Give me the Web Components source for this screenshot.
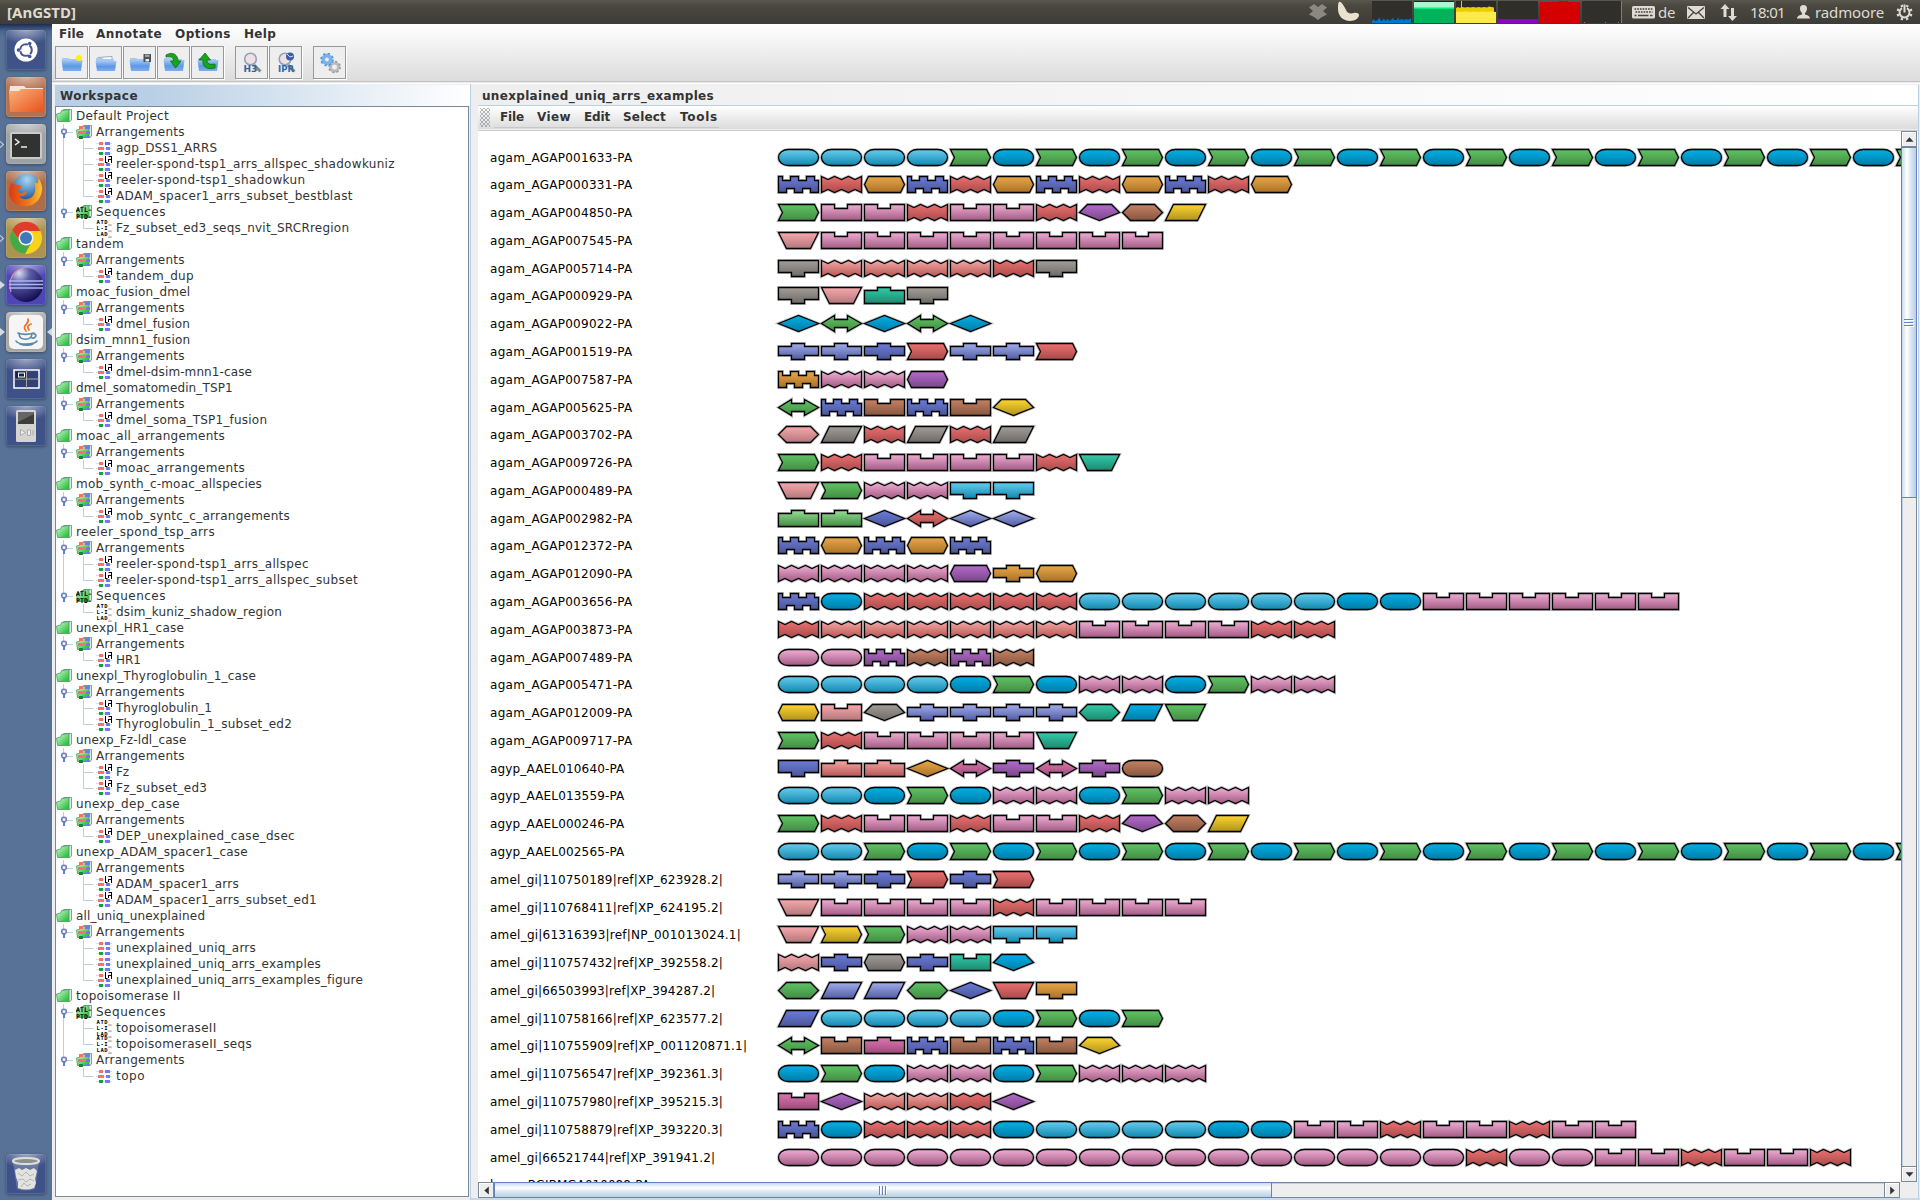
<!DOCTYPE html>
<html lang="en">
<head>
<meta charset="utf-8">
<title>AnGSTD</title>
<style>
html,body{margin:0;height:100%;overflow:hidden;background:#eee}
body{font-family:"DejaVu Sans",sans-serif;font-size:12px;color:#333}
</style>
</head>
<body>
<angstd-desktop></angstd-desktop>
<script>
function define(name, markup, init) {
  const t = document.createElement('template');
  t.innerHTML = markup;
  customElements.define(name, class extends HTMLElement {
    connectedCallback() {
      if (this.shadowRoot) return;
      this.attachShadow({ mode: 'open' }).append(t.content.cloneNode(true));
      if (init) init.call(this, this.shadowRoot);
    }
  });
}

/* A run of text that is tracked out to an exact advance width. */
define('fit-text', `<style>:host{display:inline-block;white-space:pre;flex:none}span{display:inline-block}</style><span><slot></slot></span>`, function (r) {
  const s = r.querySelector('span'), w = +this.getAttribute('w');
  if (!w) return;
  const n = this.textContent.length;
  s.style.letterSpacing = ((w - s.getBoundingClientRect().width) / n).toFixed(3) + 'px';
});

/* ---------- top panel ---------- */
define('top-panel', `<style>
:host{display:flex;height:24px;align-items:center;background:linear-gradient(#5a574d,#4a483f 25%,#3d3c37);color:#dfdbd2;font:15px/24px "Noto Sans","Open Sans",sans-serif;padding-left:7px;box-sizing:border-box}
b{font-size:15px;font-weight:700}
svg{display:block;flex:none}
.sp{flex:1}
.g{display:flex;gap:2px;margin:0 10px 0 13px}
</style>
<b><fit-text w="69">[AnGSTD]</fit-text></b><div class="sp"></div>
<svg width="18" height="18" viewBox="0 0 18 18" fill="#8b8881"><path d="M0 4.500 5 1 9 4 13 1 18 4.500 14 8 18 11.500 13 14 9 17 5 14 0 11.500 4 8Z"/></svg>
<svg width="22" height="22" viewBox="0 0 22 22" style="margin-left:10px" fill="#e9e2cf"><path d="M2 1C4 0 7 5 9 9c1 3 4 4 8 3 2-.5 5 0 5 2 0 3-4 6-9 6C6 20 1 15 1 8 1 5 1 2 2 1Z"/></svg>
<div class="g">
<svg width="40" height="24"><path fill="#302f2b" d="M0 1H40V23H0Z"/><path fill="#0077c8" d="M0 23V21l2-2 1 2 3-1 1-3 2 4 2-1 1-2 1 3 3-2 1 2 2-1 2-2 1 2 3 0 1-3 1 3 3-1 2 1 3-1 1 1 3-2V23Z"/></svg>
<svg width="40" height="24"><path fill="#22211f" d="M0 1H40V23H0Z"/><path fill="#a8f7d0" d="M0 2H40V8H0Z"/><path fill="#00f07e" d="M0 7.500H40V9H0Z"/><path fill="#00b35b" d="M0 9H40V23H0Z"/></svg>
<svg width="40" height="24"><path fill="#2b2a27" d="M0 1H40V23H0Z"/><path fill="#e8d000" d="M0 8l2-1 2 1 1-1V1h1v6l3 .5 3-.5 2 .5 3-.5 3 .5 3-.5 2 .5 3-.5 3 .5 2-1 5 1V12H0Z"/><path fill="#ffe94d" d="M0 12l3-.5 3 .5 4-.7 4 .7 4-.5 4 .5 5-.5 4 .5 4-.5 5 .5V23H0Z"/></svg>
<svg width="40" height="24"><path fill="#2f2e2a" d="M0 1H40V19H0Z"/><path fill="#8f00c4" d="M0 19H40V23H0Z"/></svg>
<svg width="40" height="24"><path fill="#d40000" d="M0 2H19V1H28V2H40V23H0Z"/></svg>
<svg width="40" height="24"><path fill="#302f2b" d="M0 1H40V23H0Z"/><path stroke="#e8600a" d="M39.500 1V23M2.500 22v1M23.500 22v1M36.500 22v1"/></svg>
</div>
<svg width="23" height="13" viewBox="0 0 23 13"><rect width="23" height="12.500" rx="1.500" fill="#dfdbd2"/><path stroke="#45433c" stroke-width="1.600" stroke-dasharray="1.700 1" d="M2.500 3H21M3.500 6H20.500"/><path stroke="#45433c" stroke-width="1.600" d="M2.500 9.500H4.500M6 9.500H16.500M18 9.500H20.500"/></svg>
<fit-text w="17" style="margin-left:3px">de</fit-text>
<svg width="18" height="13" viewBox="0 0 18 13" style="margin-left:12px"><rect width="18" height="13" rx="1" fill="#dfdbd2"/><path d="M1 1.500 9 8 17 1.500M1 12 6.500 6.500M17 12 11.500 6.500" fill="none" stroke="#45433c" stroke-width="1.300"/></svg>
<svg width="17" height="17" viewBox="0 0 17 17" style="margin-left:15px" fill="#dfdbd2"><path d="M5 0 9.500 5H6.500V13H3.500V5H.500ZM12.500 17 8 12H11V4H14V12H17Z"/></svg>
<fit-text w="35" style="margin-left:13px">18:01</fit-text>
<svg width="13" height="14" viewBox="0 0 13 14" style="margin-left:12px" fill="#dfdbd2"><path d="M6.500 0C9 0 10 1.500 10 3.500 10 5.500 9 7 8 8V9.500C10 10 13 11 13 13.500H0C0 11 3 10 5 9.500V8C4 7 3 5.500 3 3.500 3 1.500 4 0 6.500 0Z"/></svg>
<fit-text w="69" style="margin-left:5px">radmoore</fit-text>
<svg width="17" height="17" viewBox="-8.500 -8.500 17 17" style="margin:0 7px 0 12px" fill="none" stroke="#dfdbd2"><path d="M-2.500-4.300A5 5 0 1 0 2.500-4.300" stroke-width="2"/><circle r="7" stroke-width="2.200" stroke-dasharray="2.300 3.198" stroke-dashoffset="-1.500"/><path d="M0-8V0" stroke-width="2"/></svg>`);

/* ---------- launcher ---------- */
define('launcher-tile', `<style>
:host{display:block;width:40px;height:40px;border-radius:4px;box-sizing:border-box;background:radial-gradient(ellipse 70% 35% at 50% 0,rgba(255,255,255,.5),transparent),var(--c,#3d4f86);box-shadow:0 0 0 1px rgba(255,255,255,.12) inset,0 1px 3px rgba(0,0,0,.35)}
::slotted(svg){display:block}
</style><slot></slot>`);
define('app-launcher', `<style>
:host{display:flex;flex-direction:column;gap:7px;width:52px;padding:6px 0 6px 6px;box-sizing:border-box;background:linear-gradient(#1d2b4f,#4c668f 7px,#577296 14px,#577296);border-right:0;flex:none}
.r{display:flex;width:46px;height:40px;align-items:center}
.r.m::before{content:"";width:5px;height:8px;margin-left:-6px;margin-right:1px;background:#d5dbe4;clip-path:polygon(0 0,100% 50%,0 100%)}
.r.o::before{background:none;border:0;clip-path:none;width:4px;height:4px;margin-left:-8px;margin-right:3px;border:solid #c9d2de;border-width:1px 1px 0 0;transform:rotate(45deg);box-sizing:content-box}
.r.f::after{content:"";width:5px;height:8px;margin-left:1px;background:#d5dbe4;clip-path:polygon(100% 0,0 50%,100% 100%)}
.sp{flex:1}
</style>
<div class="r"><launcher-tile style="--c:#3f5388"><svg width="40" height="40" viewBox="0 0 40 40"><circle cx="20" cy="20" r="11.500" fill="#fff"/><g fill="none" stroke="#42578c" stroke-width="2"><circle cx="20" cy="20" r="5.800" stroke-dasharray="10.600 1.550" stroke-dashoffset="-6"/></g><g fill="#42578c"><circle cx="12.500" cy="20" r="1.800"/><circle cx="23.700" cy="13.500" r="1.800"/><circle cx="23.700" cy="26.500" r="1.800"/></g></svg></launcher-tile></div>
<div class="r"><launcher-tile style="--c:#b5704f"><svg width="40" height="40" viewBox="0 0 40 40"><defs><linearGradient id="fo" x2="1" y2="1"><stop stop-color="#f9b27a"/><stop offset="1" stop-color="#e9531d"/></linearGradient></defs><path fill="#f1e6de" d="M4 9h14l2 2h17v6H3Z"/><path fill="url(#fo)" d="M3 14h10l2-2h22v23H4Z"/></svg></launcher-tile></div>
<div class="r m o"><launcher-tile style="--c:#9fa2a4"><svg width="40" height="40" viewBox="0 0 40 40"><rect x="4" y="8" width="32" height="27" rx="2" fill="#c9cbc9"/><rect x="6" y="10" width="28" height="23" fill="#30332f"/><path d="M9 15l4 3-4 3M15 23h6" stroke="#eee" stroke-width="1.500" fill="none"/></svg></launcher-tile></div>
<div class="r"><launcher-tile style="--c:#ad6d4a"><svg width="40" height="40" viewBox="0 0 40 40"><defs><radialGradient id="ffb" cx=".5" cy=".2" r=".8"><stop stop-color="#a9d8f4"/><stop offset="1" stop-color="#0f4b91"/></radialGradient><linearGradient id="ffo" x2="1"><stop stop-color="#d93a14"/><stop offset=".6" stop-color="#ef7a1c"/><stop offset="1" stop-color="#fcc62e"/></linearGradient></defs><circle cx="21" cy="17" r="14" fill="url(#ffb)"/><path fill="url(#ffo)" d="M5 12c1 0 3 2 7 2 3 0 4 1 3 3-1 1-3 1-3 3 1 3 5 2 7 1 2 0 2 1 1 2-2 2-5 3-7 2 3 4 9 4 13 1 4-4 4-10 2-15 6 4 4-2 4-4 5 5 5 14 2 19-3 6-9 10-16 9C9 35 3 29 3 21c0-3 1-6 2-9Z"/></svg></launcher-tile></div>
<div class="r m o"><launcher-tile style="--c:#ad9350"><svg width="40" height="40" viewBox="-20 -20 40 40"><circle r="16" fill="#fbd21a"/><path fill="#e03c2b" d="M-14-8A16 16 0 0 1 14.500-7H0A7 7 0 0 0-6 3.500Z"/><path fill="#46a847" d="M-14-8A16 16 0 0 0-1 16L6 3.500A7 7 0 0 1-6 3.500Z"/><circle r="7.500" fill="#f4f4f4"/><circle r="6" fill="#3c79bd"/></svg></launcher-tile></div>
<div class="r m"><launcher-tile style="--c:#4d46b4"><svg width="40" height="40" viewBox="0 0 40 40"><defs><radialGradient id="ec" cx=".3" cy=".15" r=".9"><stop stop-color="#d9dcf0"/><stop offset=".35" stop-color="#5b5ba8"/><stop offset="1" stop-color="#100c4e"/></radialGradient></defs><circle cx="20" cy="20" r="17" fill="url(#ec)"/><path d="M5 27C1 12 10 4 18 3" stroke="#d68bb4" stroke-width="1.200" fill="none"/><path d="M3 16h34M3 19.500h34M3 23h34" stroke="#a9b6ef" stroke-width="1.300"/></svg></launcher-tile></div>
<div class="r m f"><launcher-tile style="--c:#a9a6a4"><svg width="40" height="40" viewBox="0 0 40 40"><rect x="3" y="3" width="34" height="34" rx="5" fill="#f5f5f5"/><g fill="none" stroke-linecap="round"><path d="M22 7c2 5-7 6-2 12M25 12c-5 2-3 4-2 6" stroke="#e8772e" stroke-width="1.800"/><path d="M12 21c4 1.500 11 1.500 16 0M13 22c1 7 12 7 13 0M28 22c4 0 1 5-2 4M10 29c2 4 18 4 21 0M14 32c5 2 12 1 13 0" stroke="#5a87a8" stroke-width="1.600"/></g></svg></launcher-tile></div>
<div class="r"><launcher-tile style="--c:#3f5189"><svg width="40" height="40" viewBox="0 0 40 40"><rect x="8" y="11" width="25" height="18" fill="#24345c" fill-opacity=".5" stroke="#fff" stroke-width="1.500"/><path d="M20.500 11V29M8 20H33" stroke="#a9a79b"/><rect x="9.500" y="12.500" width="10" height="7" fill="#17244a"/><rect x="12.500" y="14" width="6" height="4" fill="none" stroke="#fff"/></svg></launcher-tile></div>
<div class="r"><launcher-tile style="--c:#3f5189"><svg width="40" height="40" viewBox="0 0 40 40"><rect x="10" y="4" width="20" height="32" rx="1.500" fill="#d5d4d1"/><rect x="12" y="6" width="16" height="12" fill="#3c3e3c"/><path d="M12 16 28 8V6H12Z" fill="#666"/><path d="M14.500 23.500l5 3-5 3ZM21.500 24v5.500h3V24ZM27 24v5.500" fill="#eee" stroke="#aaa"/></svg></launcher-tile></div>
<div class="sp"></div>
<div class="r"><launcher-tile style="--c:#3f5189"><svg width="40" height="40" viewBox="0 0 40 40"><path d="M7 8 11 35q9 3 18 0L33 8Z" fill="#8e9bb6" opacity=".5"/><path d="M9 16l4-2 3 2 4-2 4 2 4-2 3 3-2 8 1 4-2 5q-8 3-16 0l0-6-2-5Z" fill="#e2e2df"/><path d="M12 19l4 3 4-4 4 4 4-2M12 26l5-1 3 3 4-3 4 2M15 33l3-4 3 3 4-2" stroke="#b4b5b3" fill="none"/><ellipse cx="20" cy="7" rx="13" ry="3" fill="#8b9190" stroke="#dedfd9" stroke-width="2"/></svg></launcher-tile></div>`);

/* ---------- main menu and toolbar ---------- */
const folder = (y = 0) => `<path d="M6 11h6l2 1h10v4H6Z" fill="#a9c8ee"/><path d="M5.500 ${13 + y}h21l-1.500 ${11 - y}h-18Z" fill="url(#f)"/>`;
const icons = {
  fresh: folder() + '<circle cx="23" cy="11" r="3" fill="#fff200"/>',
  open: '<path d="M8 10.500l14-1v4H8Z" fill="#fff" stroke="#9ab"/>' + folder(1),
  save: folder() + '<path d="M19.500 7h7.500v8h-7.500Z" fill="#4b5158"/><path d="M21 7.500h4.500v2.500h-4.500Z" fill="#9aa2a8"/><path d="M21.500 12h3.500v2.500h-3.500Z" fill="#e8ecee"/>',
  imp: folder() + '<path d="M8 8c7-4 12 0 12 6h3l-5.500 7-5-7h3c0-4-3-4.500-7.500-4Z" fill="#17a51c" stroke="#0a6f10" stroke-width=".8"/>',
  exp: folder() + '<path d="M23 21c-8 2-13-1-12-8H7l6-7 5.500 7H15c0 4 3 5 8 4Z" fill="#17a51c" stroke="#0a6f10" stroke-width=".8"/>',
  h3: '<path d="M18 18l6.500 6.500" stroke="#888" stroke-width="3"/><circle cx="14.500" cy="12" r="5.800" fill="#f1dfe2" stroke="#8ea2bb" stroke-width="1.600"/><text x="7.500" y="24.500" font-size="9" font-weight="700" fill="#2c68a8" font-family="DejaVu Sans">H3</text>',
  ipr: '<path d="M18 18l6.500 6.500" stroke="#888" stroke-width="3"/><circle cx="15" cy="12" r="5.800" fill="#f1dfe2" stroke="#8ea2bb" stroke-width="1.600"/><circle cx="20" cy="9.500" r="4" fill="#385fa6"/><path d="M17 7l3 3 3-1" stroke="#cfe0f5" fill="none"/><text x="8" y="24.500" font-size="8.500" font-weight="700" fill="#2c68a8" font-family="DejaVu Sans" textLength="16" lengthAdjust="spacingAndGlyphs">IPR</text>',
  gears: '<circle cx="20.500" cy="20" r="4" fill="none" stroke="#bbb" stroke-width="3"/><circle cx="20.500" cy="20" r="5.600" fill="none" stroke="#999" stroke-width="1.600" stroke-dasharray="2.100 2.298"/><circle cx="13" cy="12.500" r="3.800" fill="none" stroke="#7ab2ee" stroke-width="3.800"/><circle cx="13" cy="12.500" r="6" fill="none" stroke="#5594dd" stroke-width="1.600" stroke-dasharray="2.300 2.412"/>'
};
define('tool-button', `<style>:host{display:block;width:33px;height:33px;box-sizing:border-box;border:1px solid #999;background:#eee;box-shadow:1px 1px 0 #fff}svg{display:block;margin:-.5px}</style><svg width="32" height="32" viewBox="0 0 32 32"></svg>`, function (r) {
  r.querySelector('svg').innerHTML = '<defs><linearGradient id="f" x2="0" y2="1"><stop stop-color="#a4c8f5"/><stop offset=".55" stop-color="#5c98e6"/><stop offset="1" stop-color="#7db0ee"/></linearGradient></defs>' + icons[this.getAttribute('icon')];
});
define('main-bar', `<style>
:host{display:block;height:60px;background:linear-gradient(#fff,#dcdcdc 57px,#dcdcdc);border-bottom:1px solid #fff;box-sizing:border-box;box-shadow:inset 0 -1px #e8e8e8,inset 0 -2px #c4c4c4}
nav{display:flex;height:22px;padding:0 0 0 7px;font-weight:700;line-height:21px;gap:14px}
div{display:flex;gap:1px;padding-left:3px}
.g{margin-left:10px}
</style>
<nav><fit-text w="25">File</fit-text><fit-text w="66" style="margin-left:-2px">Annotate</fit-text><fit-text w="56" style="margin-left:-1px">Options</fit-text><fit-text w="32" style="margin-left:-1px">Help</fit-text></nav>
<div><tool-button icon="fresh"></tool-button><tool-button icon="open"></tool-button><tool-button icon="save"></tool-button><tool-button icon="imp"></tool-button><tool-button icon="exp"></tool-button><tool-button class="g" icon="h3"></tool-button><tool-button icon="ipr"></tool-button><tool-button class="g" icon="gears"></tool-button></div>`);

/* ---------- workspace tree: [project, end of label, [group, [kind, leaf, end], ...], ...] ---------- */
const tree = [
 ['Default Project',168.500,['A',['a','agp_DSS1_ARRS',216.700],['s','reeler-spond-tsp1_arrs_allspec_shadowkuniz',394.300],['s','reeler-spond-tsp1_shadowkun',305],['s','ADAM_spacer1_arrs_subset_bestblast',352.300]],['S',['q','Fz_subset_ed3_seqs_nvit_SRCRregion',348.700]]],
 ['tandem',123.500,['A',['s','tandem_dup',193.300]]],
 ['moac_fusion_dmel',189.700,['A',['s','dmel_fusion',189.500]]],
 ['dsim_mnn1_fusion',189.700,['A',['s','dmel-dsim-mnn1-case',251.500]]],
 ['dmel_somatomedin_TSP1',232.300,['A',['s','dmel_soma_TSP1_fusion',266.700]]],
 ['moac_all_arrangements',224.500,['A',['s','moac_arrangements',244.500]]],
 ['mob_synth_c-moac_allspecies',261.500,['A',['s','mob_syntc_c_arrangements',289.500]]],
 ['reeler_spond_tsp_arrs',214.500,['A',['s','reeler-spond-tsp1_arrs_allspec',308.500],['s','reeler-spond-tsp1_arrs_allspec_subset',357.500]],['S',['q','dsim_kuniz_shadow_region',281.500]]],
 ['unexpl_HR1_case',183.500,['A',['s','HR1',140.500]]],
 ['unexpl_Thyroglobulin_1_case',255.500,['A',['s','Thyroglobulin_1',211.500],['s','Thyroglobulin_1_subset_ed2',291.500]]],
 ['unexp_Fz-ldl_case',186,['A',['s','Fz',128.500],['s','Fz_subset_ed3',206.700]]],
 ['unexp_dep_case',179.500,['A',['s','DEP_unexplained_case_dsec',294.500]]],
 ['unexp_ADAM_spacer1_case',247.500,['A',['s','ADAM_spacer1_arrs',238.500],['s','ADAM_spacer1_arrs_subset_ed1',316.500]]],
 ['all_uniq_unexplained',204.700,['A',['a','unexplained_uniq_arrs',255.500],['a','unexplained_uniq_arrs_examples',320.500],['s','unexplained_uniq_arrs_examples_figure',362.500]]],
 ['topoisomerase II',180,['S',['q','topoisomeraseII',216],['q','topoisomeraseII_seqs',251.500]],['A',['a','topo',144.500]]]
];
const fold = '<defs><linearGradient id="g" x2="1" y2="1"><stop stop-color="#e4fbe6"/><stop offset=".45" stop-color="#7fdc8a"/><stop offset="1" stop-color="#17b52c"/></linearGradient></defs><path d="M5 3.500 8 1.500H15.500V12L13.500 14Z" fill="#dfe6e0" stroke="#7d9484" stroke-width=".9"/><path d="M.500 6 4.500 5 6 2.500 13 1.500V13.500H1.500Z" fill="url(#g)" stroke="#3f9f5c" stroke-width=".8"/>';
const bars = '<path d="M0 3.500H16M0 8.500H16M0 13.500H16" stroke="#ddd"/><path fill="#ff6e6e" d="M3 2h4v3H3ZM2 7h6v3H2Z"/><path fill="#7078ff" d="M9 2h5v3H9ZM10 7h4v3h-4ZM9 12h5v3H9Z"/><path fill="#16a040" d="M3 12h4v3H3Z"/>';
const nodeIcon = {
  p: fold,
  A: fold + '<path fill="#ff6e6e" d="M3 2h4v3H3ZM2 7h7v3H2Z"/><path fill="#7078ff" d="M9 2h5v3H9ZM10 7h4v3h-4ZM9 12h5v2H9Z"/><path fill="#0d8a34" d="M3 12h4v3H3Z"/>',
  S: fold + '<g font-family="DejaVu Sans Mono" font-weight="700" font-size="6.500" fill="#000"><text x="0" y="7.500" textLength="16">ATL-</text><text x="0" y="14.500" textLength="16">PTD-</text></g>',
  a: bars,
  s: bars + '<path fill="#fff" d="M8.500-1h7.500v8H8.500Z"/><path d="M9.500 0V7M9.500 6.500H11.500M12 3.500H15M12.500 .500H15.500M15.500 0V7M12.500 3.500V6" stroke="#000" fill="none"/>',
  q: '<g font-family="DejaVu Sans Mono" font-weight="700" font-size="5.500" fill="#000"><text x=".5" y="4" textLength="15">ATD_</text><text x=".5" y="10" textLength="15">L-I_</text><text x=".5" y="16" textLength="15">LAD_</text></g>'
};
define('tree-node', `<style>
:host{display:flex;height:16px;align-items:center;line-height:16px}
svg{display:block;flex:none;overflow:visible}
fit-text{margin-left:4px}
</style>`, function (r) {
  const k = this.getAttribute('kind'), end = +this.getAttribute('end');
  const lines = this.getAttribute('lines') || '';
  const x = k === 'p' ? 76 : 'AS'.includes(k) ? 96 : 116;
  const iw = x - 76;
  let g = '';
  if (iw >= 20) {
    if (lines.includes('T')) g += '<path d="M7.500 0V8" />';
    if (lines.includes('B')) g += '<path d="M7.500 8V16" />';
  }
  if (iw === 20) g += '<path d="M10 8.500H17"/><path d="M8 9V14" stroke="#5d82bd" stroke-width="2"/><circle cx="8" cy="7.500" r="2.300" fill="#fff" stroke="#5d82bd" stroke-width="1.600"/>';
  if (iw === 40) g += `<path d="M27.500 0V${lines.includes('m') ? 16 : 8.500}M27.500 8.500H37.500"/>`;
  if (iw) r.innerHTML += `<svg width="${iw}" height="16" fill="none" stroke="#b8cfe5">${g}</svg>`;
  const f = document.createElement('fit-text');
  f.setAttribute('w', end - x + .5);
  f.textContent = this.getAttribute('label');
  r.innerHTML += `<svg width="16" height="16" viewBox="0 0 16 16">${nodeIcon[k]}</svg>`;
  r.append(f);
});
define('workspace-tree', `<style>
:host{display:flex;flex-direction:column;width:419px;box-sizing:border-box;padding:1px 0 3px 3px;border-right:1px solid #b8cfe5;background:#eee;flex:none}
header{height:21px;flex:none;font-weight:700;line-height:23px;padding-left:5px;background:linear-gradient(90deg,#b8cfe5 22%,#fff)}
div{flex:1;border:1px solid #7a8a99;background:#fff;margin-right:1px;padding-top:1px}
</style><header><fit-text w="78">Workspace</fit-text></header><div></div>`, function (r) {
  const box = r.querySelector('div');
  const add = (kind, label, end, lines) => {
    const n = document.createElement('tree-node');
    n.setAttribute('kind', kind); n.setAttribute('label', label); n.setAttribute('end', end); n.setAttribute('lines', lines);
    box.append(n);
  };
  for (const [name, end, ...groups] of tree) {
    add('p', name, end, '');
    groups.forEach(([g, ...leaves], i) => {
      const more = i < groups.length - 1;
      add(g, g === 'A' ? 'Arrangements' : 'Sequences', g === 'A' ? 184.300 : 165.500, 'T' + (more ? 'B' : ''));
      leaves.forEach(([k, l, e], j) => add(k, l, e, (more ? 'TB' : '') + (j < leaves.length - 1 ? 'm' : '')));
    });
  }
});

/* ---------- domain arrangements ---------- */
const shapes = {
  o: 'M10 0H30A10 8 0 0 1 30 16H10A10 8 0 0 1 10 0Z',
  v: 'M0 0H36L40 8 36 16H0L4 8Z',
  k: 'M0 0H4V4H12V0H20V4H28V0H36V4H40V16H32V12H24V16H16V12H8V16H0Z',
  w: 'M0 0 6.500 3 13 0 20 3 27 0 33.500 3 40 0V16L33.500 13 27 16 20 13 13 16 6.500 13 0 16Z',
  u: 'M0 0H13V4H26V0H40V16H0Z',
  t: 'M0 0H40L32 16H8Z',
  e: 'M0 0H40V12H26V16H13V12H0Z',
  b: 'M0 3H13V0H26V3H40V16H0Z',
  d: 'M0 8 20 0 40 8 20 16Z',
  a: 'M0 8 13 0V4H26V0L40 8 26 16V12H13V16Z',
  p: 'M0 3H13V0H26V3H40V12H26V16H13V12H0Z',
  h: 'M4 0H36L40 8 36 16H4L0 8Z',
  H: 'M8 0H32L40 8 32 16H8L0 8Z',
  g: 'M0 8 8 0H32L40 8 20 16Z',
  q: 'M8 0H40L32 16H0Z'
};
const colours = {
  c: ['#66cef0','#1287ae'], C: ['#00b0e6','#007ca6'], G: ['#5fc463','#438c43'], R: ['#ec7070','#a84b4b'],
  P: ['#f0aed3','#a25a84'], S: ['#f8a9ad','#b3777a'], s: ['#f4a8a6','#b75653'], B: ['#6c7cd8','#4a5598'],
  b: ['#a4aeec','#505ca4'], O: ['#eaa748','#a97229'], V: ['#b56bcc','#7a4689'], N: ['#c48264','#87563f'],
  Y: ['#fdd533','#b0921b'], E: ['#a39e99','#6d6966'], T: ['#31cca9','#1e886f'], g: ['#98de98','#428c42'],
  M: ['#e075b2','#9a4c79']
};
define('domain-glyph', `<style>:host{display:block;width:43px;height:20px;flex:none}svg{display:block;overflow:visible}</style><svg width="43" height="20" viewBox="-.5 -2.500 43 20"></svg>`, function (r) {
  const [s, c] = this.getAttribute('code'), [a, b] = colours[c], d = shapes[s];
  r.querySelector('svg').innerHTML = `<defs><linearGradient id="f" x2="0" y2="1"><stop stop-color="${a}"/><stop offset="1" stop-color="${b}"/></linearGradient></defs><path d="${d}" fill="none" stroke="#000" stroke-opacity=".24" stroke-width="3"/><path d="${d}" fill="url(#f)" stroke="#000" stroke-width="1.300"/>`;
});
define('arrangement-row', `<style>
:host{display:flex;align-items:flex-start;flex:none;color:#000}
fit-text{margin-top:7px;line-height:16px}
.l{width:288px;flex:none;display:flex}
.d{display:flex;margin-top:4px}
</style><div class="l"></div><div class="d"></div>`, function (r) {
  const f = document.createElement('fit-text');
  f.setAttribute('w', +this.getAttribute('end') - 490 + .5);
  f.textContent = this.getAttribute('label');
  r.querySelector('.l').append(f);
  r.querySelector('.d').innerHTML = this.getAttribute('domains').split(' ').filter(Boolean).map(t => {
    const [c, n] = t.split('*');
    return `<domain-glyph code="${c}"></domain-glyph>`.repeat(+n || 1);
  }).join('');
});
const chain = 'vG oC '.repeat(12);
const rows = `agam_AGAP001633-PA;632;oc*4 ${chain.slice(0, 66)}vG
agam_AGAP000331-PA;632;kB wR hO kB wR hO kB wR hO kB wR hO
agam_AGAP004850-PA;632;vG uP*2 wR uP*2 wR gV HN qY
agam_AGAP007545-PA;632;tS uP*8
agam_AGAP005714-PA;632;eE ws*4 wR eE
agam_AGAP000929-PA;632;eE tS bT eE
agam_AGAP009022-PA;632;dC aG dC aG dC
agam_AGAP001519-PA;632;pb*2 pB vR pb*2 vR
agam_AGAP007587-PA;632;kO wP*2 hV
agam_AGAP005625-PA;632;aG kB uN kB uN gY
agam_AGAP003702-PA;632;HS qE wR qE wR qE
agam_AGAP009726-PA;632;vG wR uP*4 wR tT
agam_AGAP000489-PA;632;tS vG wP*2 ec*2
agam_AGAP002982-PA;632;bg*2 dB aR db*2
agam_AGAP012372-PA;632;kB hO kB hO kB
agam_AGAP012090-PA;632;wP*4 hV pO hO
agam_AGAP003656-PA;632;kB oC wR*5 oc*6 oC*2 uP*6
agam_AGAP003873-PA;632;wR ws*6 uP*4 wR*2
agam_AGAP007489-PA;632;oP*2 kV wN kV wN
agam_AGAP005471-PA;632;oc*4 oC vG oC wP*2 oC vG wP*2
agam_AGAP012009-PA;632;hY uS gE pb*4 HT qC tG
agam_AGAP009717-PA;632;vG wR uP*4 tT
agyp_AAEL010640-PA;624;eB bs*2 dO aM pV aM pV oN
agyp_AAEL013559-PA;624;oc*2 oC vG oC wP*2 oC vG wP*2
agyp_AAEL000246-PA;624;vG wR uP*2 wR uP*2 wR gV HN qY
agyp_AAEL002565-PA;624;oc*2 ${chain}vG
amel_gi|110750189|ref|XP_623928.2|;722.500;pb*2 pB vR pB vR
amel_gi|110768411|ref|XP_624195.2|;722.500;tS uP*4 wR uP*4
amel_gi|61316393|ref|NP_001013024.1|;740.500;tS vY vG wP*2 ec*2
amel_gi|110757432|ref|XP_392558.2|;722.500;wS pB hE pB uT gC
amel_gi|66503993|ref|XP_394287.2|;714.700;HG qb*2 HG dB tR eO
amel_gi|110758166|ref|XP_623577.2|;722.500;qB oc*4 oC vG oC vG
amel_gi|110755909|ref|XP_001120871.1|;746.700;aG uN bM kB uN kB uN gY
amel_gi|110756547|ref|XP_392361.3|;722.500;oC vG oC wP*2 oC vG wP*3
amel_gi|110757980|ref|XP_395215.3|;722.500;uM dV ws*2 wR dV
amel_gi|110758879|ref|XP_393220.3|;722.500;kB oC wR*3 oC oc*4 oC*2 uP*2 wR uP*2 wR uP*2
amel_gi|66521744|ref|XP_391941.2|;714.700;oP*16 wR oP*2 uP*2 wR uP*2 wR
bmor_BGIBMGA010088-PA;649.500;`.split('\n');

define('scroll-arrow', `<style>:host{display:flex;align-items:center;justify-content:center;width:16px;height:16px;flex:none;box-sizing:border-box;border:1px solid #7a8a99;background:#eee;box-shadow:inset 1px 1px #fff}svg{display:block;transform:rotate(var(--turn,0deg))}</style><svg width="9" height="9" viewBox="-4.500 -4.500 9 9"><path d="M-4 2.300 0-2.200 4 2.300Z" fill="#333"/></svg>`);
define('scroll-bar', `<style>
:host{display:flex;box-sizing:border-box;background:#eee;flex:none}
:host([axis=v]){flex-direction:column;width:16px;box-shadow:inset 1px 0 #7a8a99,inset 2px 0 #b8cfe5,inset -1px 0 #7a8a99}
:host([axis=h]){height:16px;box-shadow:inset 0 1px #7a8a99,inset 0 2px #b8cfe5,inset 0 -1px #7a8a99}
:host([axis=v]) .e{--turn:180deg}
:host([axis=h]) .b{--turn:-90deg}
:host([axis=h]) .e{--turn:90deg}
.t{flex:none;box-sizing:border-box;border:1px solid #6382bf;display:flex;align-items:center;justify-content:center}
:host([axis=v]) .t{height:351px;background:linear-gradient(90deg,#c8dbee,#fff 35%,#dce9f4 60%,#b8cfe5)}
:host([axis=h]) .t{width:778px;background:linear-gradient(#c8dbee,#fff 35%,#dce9f4 60%,#b8cfe5)}
.t svg{display:block}
:host([axis=h]) .t svg{transform:rotate(-90deg)}
.s{flex:1}
</style><scroll-arrow class="b"></scroll-arrow><div class="t"><svg width="10" height="10"><path stroke="#fff" d="M1 2.500H10M1 5.500H10M1 8.500H10"/><path stroke="#6382bf" d="M0 1.500H9M0 4.500H9M0 7.500H9"/></svg></div><div class="s"></div><scroll-arrow class="e"></scroll-arrow>`);
define('arrangement-view', `<style>
:host{display:flex;flex-direction:column;flex:1;min-width:0;margin:1px 1px 2px 7px;background:#fff;border-right:1px solid #b8cfe5}
header{height:20px;flex:none;line-height:23px;font-weight:700;padding-left:4px;background:linear-gradient(90deg,#eee,#fff);border-bottom:1px solid #b8cfe5}
nav{height:24px;flex:none;display:flex;background:linear-gradient(#fff,#dadada);border-bottom:1px solid #ccc;font-weight:700;line-height:23px;box-shadow:inset 0 -1px #eee}
nav i{width:10px;height:19px;margin:2px 4px 0 2px;background:radial-gradient(circle,#8b9197 .6px,transparent .9px) 0 0/4px 4px,radial-gradient(circle,#8b9197 .6px,transparent .9px) 2px 2px/4px 4px}
nav div{display:flex;gap:13px;width:225px;height:22px;padding-left:6px;border-bottom:1px solid #c8c8c8;box-sizing:border-box}
.m{flex:1;min-height:0;display:flex}
.c{flex:1;min-width:0;overflow:hidden;padding:12px 0 0 12px;display:flex;flex-direction:column}
scroll-bar[axis=v]{margin-right:1px}
.b{display:flex;height:16px;background:#eee}
.b scroll-bar{width:1422px}
</style><header><fit-text w="232">unexplained_uniq_arrs_examples</fit-text></header>
<nav><i></i><div><fit-text w="24">File</fit-text><fit-text w="34">View</fit-text><fit-text w="26">Edit</fit-text><fit-text w="43">Select</fit-text><fit-text w="38" style="margin-left:1px">Tools</fit-text></div></nav>
<div class="m"><div class="c"></div><scroll-bar axis="v"></scroll-bar></div><div class="b"><scroll-bar axis="h"></scroll-bar></div>`, function (r) {
  const c = r.querySelector('.c');
  const off = i => Math.floor(i * 250 / 9 + 1e-6);
  rows.forEach((line, i) => {
    const p = line.split(';'), e = document.createElement('arrangement-row');
    e.setAttribute('label', p[0]); e.setAttribute('end', p[1]); e.setAttribute('domains', p[2]);
    e.style.height = off(i + 1) - off(i) + 'px';
    c.append(e);
  });
});

define('angstd-desktop', `<style>
:host{display:flex;flex-direction:column;width:1920px;height:1200px;overflow:hidden}
.a{flex:1;min-height:0;display:flex}
.w{flex:1;min-width:0;display:flex;flex-direction:column;background:#eee;box-shadow:inset 1px 0 #b8cfe5,inset 0 -2px #c8d9ea}
.s{flex:1;min-height:0;display:flex}
</style><top-panel></top-panel><div class="a"><app-launcher></app-launcher><div class="w"><main-bar></main-bar><div class="s"><workspace-tree></workspace-tree><arrangement-view></arrangement-view></div></div></div>`);
</script>
</body>
</html>
